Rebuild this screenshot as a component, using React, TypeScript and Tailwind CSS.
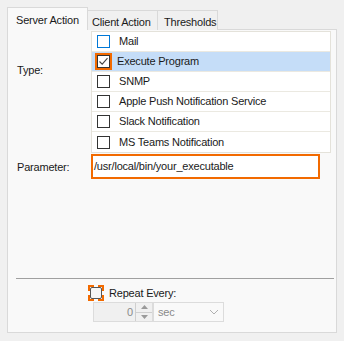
import React from 'react';

// Windows-forms style alert action dialog
const items = [
    { label: 'Mail', checked: false, selected: false, hover: true },
    { label: 'Execute Program', checked: true, selected: true, hover: false },
    { label: 'SNMP', checked: false, selected: false, hover: false },
    { label: 'Apple Push Notification Service', checked: false, selected: false, hover: false },
    { label: 'Slack Notification', checked: false, selected: false, hover: false },
    { label: 'MS Teams Notification', checked: false, selected: false, hover: false },
];

const Check = () => (
    <svg width="11" height="11" viewBox="0 0 11 11">
        <path d="M1.5 5.5 L4.2 8.2 L9.5 2.2" fill="none" stroke="#444" strokeWidth="1.1" />
    </svg>
);

const App: React.FC = () => {
    return (
        <div
            className="w-[344px] h-[341px] bg-[#f0f0f0] pt-[7px] pl-[7px] text-[11px] tracking-[-0.2px] text-[#1a1a1a] overflow-hidden"
            style={{ fontFamily: '"Liberation Sans", Arial, sans-serif' }}
        >
            {/* tabs */}
            <div className="flex items-end h-[23px]">
                <div className="relative z-10 h-[23px] w-[81px] bg-[#f9f9f9] border border-[#d9d9d9] border-b-0 pl-[8px] pt-[4px]">
                    Server Action
                </div>
                <div className="h-[20px] w-[70px] border-t border-r border-[#d9d9d9] bg-[#f0f0f0] pl-[4px] pt-[3px]">
                    Client Action
                </div>
                <div className="h-[20px] w-[60px] border-t border-r border-[#d9d9d9] bg-[#f0f0f0] pl-[6px] pt-[3px]">
                    Thresholds
                </div>
            </div>

            {/* panel */}
            <div className="-mt-px w-[330px] h-[304px] bg-[#f9f9f9] border border-[#d9d9d9] flex flex-col">
                <div className="flex mt-px">
                    <div className="w-[83px] pl-[9px] pt-[31px]">Type:</div>
                    <div className="w-[240px] border border-[#e4e2da] bg-white">
                        {items.map((it) => (
                            <div
                                key={it.label}
                                className={`h-[20px] flex items-center border-b border-[#ebe9e1] last:border-b-0 ${it.selected ? 'bg-[#c5ddf8]' : 'bg-white'}`}
                            >
                                {it.checked ? (
                                    <div className="ml-[3px] w-[17px] h-[17px] border-2 border-[#f26a00] flex items-center justify-center">
                                        <div className="w-[13px] h-[13px] border border-[#333] bg-white flex items-center justify-center">
                                            <Check />
                                        </div>
                                    </div>
                                ) : (
                                    <div className={`ml-[5px] w-[13px] h-[13px] border bg-white mx-[2px] ${it.hover ? 'border-[#0078d7]' : 'border-[#333]'}`} />
                                )}
                                <span className={it.checked ? 'ml-[5px]' : 'ml-[7px]'}>{it.label}</span>
                            </div>
                        ))}
                    </div>
                </div>

                <div className="flex items-center mt-px">
                    <div className="w-[83px] pl-[9px] pt-[2px]">Parameter:</div>
                    <div className="w-[229px] h-[25px] border-2 border-[#f26a00] bg-white flex items-center pl-[1px]">
                        /usr/local/bin/your_executable
                    </div>
                </div>

                <div className="flex-1" />

                <div className="ml-[8px] w-[318px] h-px bg-[#a0a0a0]" />

                <div className="ml-[80px] mt-[6px] flex items-center">
                    <div className="w-[16px] h-[16px] border-2 border-dashed border-[#f26a00] flex items-center justify-center">
                        <div className="w-[12px] h-[12px] rounded-[2px] border border-[#555] bg-[#f5f5f5]" />
                    </div>
                    <span className="ml-[5px]">Repeat Every:</span>
                </div>

                <div className="ml-[85px] mt-[1px] mb-[10px] flex items-center">
                    <div className="w-[60px] h-[20px] flex border border-[#dcdcdc] bg-[#f0f0f0]">
                        <div className="flex-1 text-right pr-[2px] text-[#8a8a8a] leading-[18px]">0</div>
                        <div className="w-[17px] flex flex-col border-l border-[#cfcfcf]">
                            <div className="flex-1 flex items-center justify-center border-b border-[#cfcfcf]">
                                <svg width="7" height="4" viewBox="0 0 7 4"><path d="M0 4 L3.5 0 L7 4Z" fill="#9a9a9a" /></svg>
                            </div>
                            <div className="flex-1 flex items-center justify-center">
                                <svg width="7" height="4" viewBox="0 0 7 4"><path d="M0 0 L3.5 4 L7 0Z" fill="#9a9a9a" /></svg>
                            </div>
                        </div>
                    </div>
                    <div className="w-[71px] h-[20px] flex items-center justify-between border border-[#dcdcdc] bg-[#f9f9f9] pl-[4px] pr-[4px] text-[#8a8a8a]">
                        <span>sec</span>
                        <svg width="10" height="6" viewBox="0 0 10 6"><path d="M1 1 L5 5 L9 1" fill="none" stroke="#b0b0b0" strokeWidth="1" /></svg>
                    </div>
                </div>
            </div>
        </div>
    );
};

export default App;
